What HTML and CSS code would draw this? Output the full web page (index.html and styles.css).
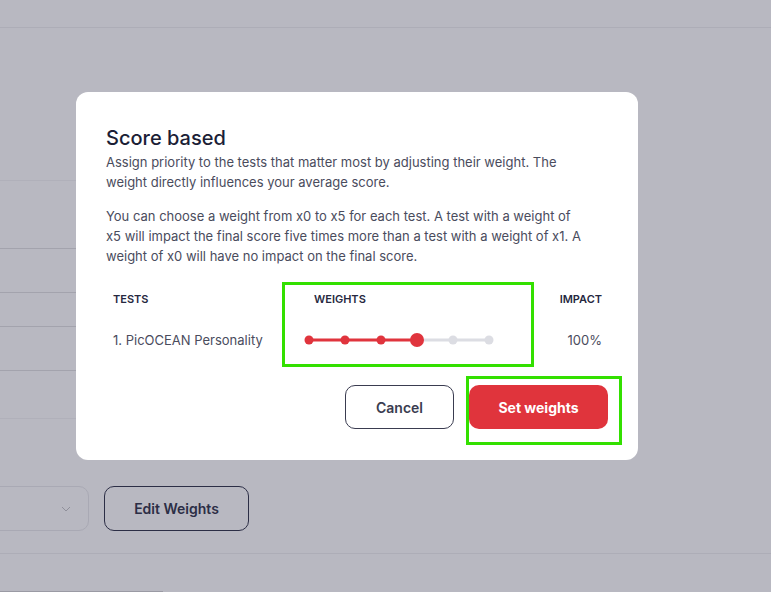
FILE: index.html
```html
<!DOCTYPE html>
<html lang="en">
<head>
<meta charset="utf-8">
<title>Score based</title>
<link rel="stylesheet" href="styles.css">
</head>
<body>
<div class="page">
  <div class="topbar"></div>
  <div class="list">
    <div class="row r1"></div>
    <div class="row r2"></div>
    <div class="row r3"></div>
    <div class="row r4"></div>
    <div class="row r5"></div>
    <div class="row r6"></div>
  </div>
  <div class="controls">
    <div class="select">
      <svg class="chev" width="10" height="6" viewBox="0 0 10 6"><path d="M1 1l4 4 4-4" fill="none" stroke="#8f8f9a" stroke-width="1"/></svg>
    </div>
    <button class="edit">Edit Weights</button>
  </div>
  <div class="divider"></div>
  <div class="progress"></div>
</div>

<div class="modal">
  <h2 class="title">Score based</h2>
  <p class="text">Assign priority to the tests that matter most by adjusting their weight. The weight directly influences your average score.</p>
  <p class="text second">You can choose a weight from x0 to x5 for each test. A test with a weight of x5 will impact the final score five times more than a test with a weight of x1. A weight of x0 will have no impact on the final score.</p>
  <div class="table">
    <div class="th">TESTS</div>
    <div class="th weights">WEIGHTS</div>
    <div class="th impact">IMPACT</div>
    <div class="td">1. PicOCEAN Personality</div>
    <div class="td slider">
      <svg width="192" height="16" viewBox="0 0 192 16">
        <line x1="6" y1="8" x2="114" y2="8" stroke="#e0343d" stroke-width="3"/>
        <line x1="114" y1="8" x2="186" y2="8" stroke="#dcdde3" stroke-width="3"/>
        <circle cx="6" cy="8" r="4.5" fill="#e0343d"/>
        <circle cx="42" cy="8" r="4.5" fill="#e0343d"/>
        <circle cx="78" cy="8" r="4.5" fill="#e0343d"/>
        <circle cx="114" cy="8" r="7" fill="#e0343d"/>
        <circle cx="150" cy="8" r="4.5" fill="#dcdde3"/>
        <circle cx="186" cy="8" r="4.5" fill="#dcdde3"/>
      </svg>
    </div>
    <div class="td impact">100%</div>
  </div>
  <div class="actions">
    <button class="btn cancel">Cancel</button>
    <button class="btn primary">Set weights</button>
  </div>
  <div class="mark mark1"></div>
  <div class="mark mark2"></div>
</div>
</body>
</html>
```

FILE: styles.css
```css
* { box-sizing: border-box; }
html, body { margin: 0; padding: 0; }
body {
  width: 771px;
  height: 592px;
  overflow: hidden;
  background: #b8b8c1;
  font-family: Inter, "Noto Sans", sans-serif;
  position: relative;
}
.page { display: flex; flex-direction: column; }
.topbar { height: 28px; border-bottom: 1px solid #adadb7; }
.list { width: 420px; padding-top: 152px; }
.row { border-top: 1px solid #a3a3ad; }
.r1 { height: 68px; border-top-color: #b0b0ba; }
.r2 { height: 44px; }
.r3 { height: 34px; }
.r4 { height: 44px; }
.r5 { height: 48px; }
.r6 { height: 0; border-top-color: #b0b0ba; }
.controls {
  display: flex;
  gap: 15px;
  margin-top: 67px;
  height: 45px;
}
.select {
  width: 99px;
  margin-left: -10px;
  height: 45px;
  border: 1px solid #a9a9b4;
  border-radius: 10px;
  display: flex;
  align-items: center;
  justify-content: flex-end;
  padding-right: 17px;
}
.chev { display: block; }
.edit {
  width: 145px;
  height: 45px;
  border: 1px solid #2c2e46;
  border-radius: 10px;
  background: transparent;
  font-family: inherit;
  font-size: 14px;
  font-weight: 600;
  color: #2c2e46;
  padding: 0;
}
.divider { margin-top: 22px; border-top: 1px solid #adadb7; }
.progress { margin-top: 37px; width: 163px; border-top: 1px solid #9a9aa4; }

.modal {
  position: absolute;
  left: 76px;
  top: 92px;
  width: 562px;
  height: 368px;
  background: #fff;
  border-radius: 12px;
  padding: 33px 30px 0 30px;
  color: #4a4c5d;
}
.title {
  margin: 0;
  font-size: 20px;
  line-height: 27px;
  font-weight: 500;
  color: #1b1e36;
}
.text {
  margin: 0;
  max-width: 480px;
  font-size: 13px;
  line-height: 20px;
  color: #4a4c5d;
}
.second { margin-top: 14px; }
.table {
  display: grid;
  grid-template-columns: 192px 1fr auto;
  padding: 0 6px 0 7px;
  margin-top: 22px;
  align-items: center;
}
.th {
  font-size: 11px;
  font-weight: 600;
  color: #262840;
  height: 22px;
  line-height: 22px;
}
.th.weights { padding-left: 9px; }
.impact { text-align: right; }
.td {
  font-size: 13px;
  color: #4a4c5d;
  height: 40px;
  margin-top: 10px;
  display: flex;
  align-items: center;
}
.td.impact { justify-content: flex-end; }
.slider svg { display: block; margin-left: -2px; }
.actions {
  display: flex;
  justify-content: flex-end;
  gap: 15px;
  margin-top: 25px;
}
.btn {
  height: 44px;
  border-radius: 10px;
  font-family: inherit;
  font-size: 14px;
  font-weight: 600;
  padding: 0;
}
.cancel {
  width: 109px;
  background: #fff;
  border: 1px solid #3a3c50;
  color: #3a3c50;
}
.primary {
  width: 139px;
  background: #e0343c;
  border: none;
  color: #fff;
  font-weight: 700;
}
.mark {
  position: absolute;
  border: 3px solid #33e000;
  pointer-events: none;
}
.mark1 { left: 206px; top: 190px; width: 252px; height: 85px; }
.mark2 { left: 390px; top: 284px; width: 156px; height: 69px; }
```
